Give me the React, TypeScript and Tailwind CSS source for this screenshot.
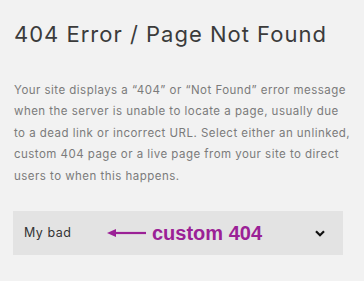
import React from 'react';

const lines = [
    'Your site displays a \u201c404\u201d or \u201cNot Found\u201d error message',
    'when the server is unable to locate a page, usually due',
    'to a dead link or incorrect URL. Select either an unlinked,',
    'custom 404 page or a live page from your site to direct',
    'users to when this happens.',
];

function App() {
    return (
        <div className="w-[364px] h-[281px] bg-[#f2f2f2] pl-[13px] pt-[20px] overflow-hidden" style={{ fontFamily: 'Inter, "Noto Sans", sans-serif' }}>
            <h1 className="pl-[1px] text-[22px] leading-[28px] text-[#3b3b3b] font-normal tracking-[1px] whitespace-nowrap">
                404 Error / Page Not Found
            </h1>
            <p className="mt-[32px] pl-[1px] text-[11.5px] leading-[21.4px] text-[#7b7b7b] tracking-[0.47px]">
                {lines.map((line, i) => (
                    <span key={i} className="block whitespace-nowrap">{line}</span>
                ))}
            </p>
            <div className="mt-[24px] w-[330px] h-[44px] bg-[#e3e3e3] flex items-center pl-[11px] pr-[18px]">
                <span className="w-[83px] text-[12.5px] text-[#333] tracking-[0.5px]">My bad</span>
                <svg width="40" height="10" viewBox="0 0 40 10" className="shrink-0">
                    <line x1="7" y1="5" x2="39" y2="5" stroke="#9b2196" strokeWidth="2.2" />
                    <polygon points="0,5 9,1 9,9" fill="#9b2196" />
                </svg>
                <span className="ml-[5px] text-[20px] font-bold text-[#9b2196] leading-none whitespace-nowrap" style={{ fontFamily: '"Liberation Sans", Arial, sans-serif' }}>
                    custom 404
                </span>
                <svg width="10" height="7" viewBox="0 0 10 7" className="ml-auto shrink-0">
                    <path d="M1 1.2 L5 5.2 L9 1.2" fill="none" stroke="#111" strokeWidth="2.2" />
                </svg>
            </div>
        </div>
    );
}

export default App
